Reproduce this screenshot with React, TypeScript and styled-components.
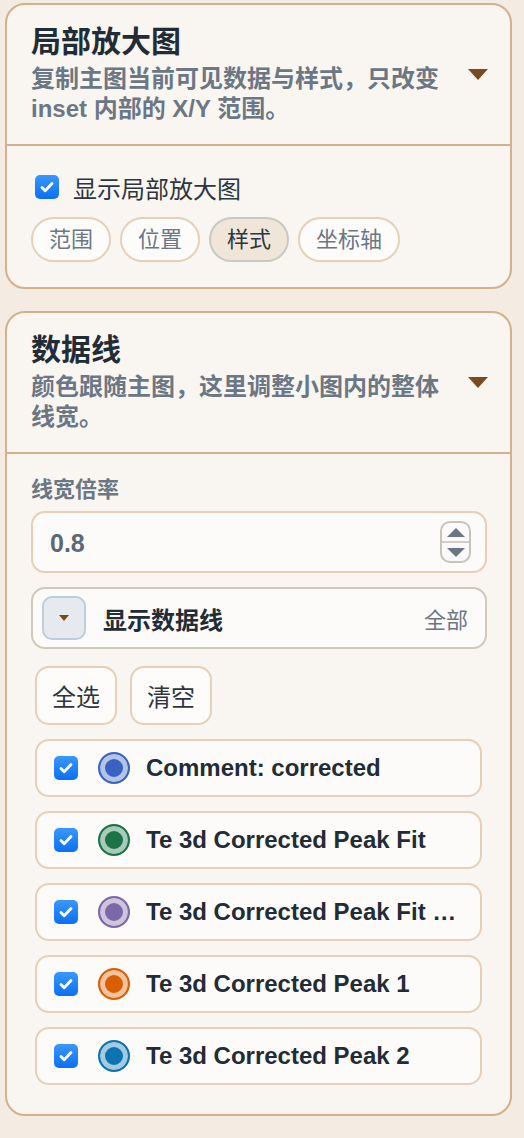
import React, { useState } from "react";
import styled, { createGlobalStyle } from "styled-components";

const FONT = `"Liberation Sans", "Noto Sans CJK SC", sans-serif`;

const GlobalStyle = createGlobalStyle`
    html, body {
        margin: 0;
        padding: 0;
        background: #f4ebe2;
        font-family: ${FONT};
    }
    * {
        box-sizing: border-box;
    }
`;

const Page = styled.div`
    width: 524px;
    padding: 3px 12px 0 5px;
    display: flex;
    flex-direction: column;
    gap: 22px;
`;

const Card = styled.section`
    background: #f9f5f0;
    border: 2px solid #d6af8b;
    border-radius: 20px;
    overflow: hidden;
`;

// next card, only its top edge is on screen
const CardStub = styled(Card)`
    height: 120px;
`;

const CardHeader = styled.div`
    display: flex;
    align-items: center;
    gap: 16px;
    padding: 19px 22px 20px 24px;
    border-bottom: 2px solid #d6af8b;
`;

const HeaderText = styled.div`
    flex: 1;
    min-width: 0;
`;

const Title = styled.div`
    font-size: 30px;
    line-height: 36px;
    font-weight: 700;
    color: #222c36;
    margin-bottom: 4px;
`;

const Subtitle = styled.div`
    font-size: 24px;
    line-height: 30px;
    font-weight: 600;
    color: #6b7785;
`;

const Caret = styled.span<{ $size?: number }>`
    width: 0;
    height: 0;
    flex: none;
    border-left: ${(p) => (p.$size ?? 20) / 2}px solid transparent;
    border-right: ${(p) => (p.$size ?? 20) / 2}px solid transparent;
    border-top: ${(p) => Math.round((p.$size ?? 20) * 0.55)}px solid #7a4a1e;
`;

const CardBody = styled.div<{ $pt: number; $pb: number }>`
    padding: ${(p) => p.$pt}px 23px ${(p) => p.$pb}px 24px;
    display: flex;
    flex-direction: column;
`;

const CheckRow = styled.label`
    display: flex;
    align-items: center;
    gap: 14px;
    height: 28px;
    padding-left: 4px;
    font-size: 24px;
    color: #2d3640;
`;

const CheckBox = styled.span`
    width: 24px;
    height: 24px;
    flex: none;
    border-radius: 5px;
    background: linear-gradient(#3a97ff, #0a70f2);
    display: flex;
    align-items: center;
    justify-content: center;
    svg {
        width: 16px;
        height: 16px;
    }
`;

const Pills = styled.div`
    display: flex;
    gap: 9px;
    margin-top: 16px;
`;

const Pill = styled.button<{ $active?: boolean }>`
    height: 45px;
    padding: 0 16px;
    border-radius: 999px;
    border: 2px solid ${(p) => (p.$active ? "#c9c9c3" : "#e6d0b8")};
    background: ${(p) => (p.$active ? "#efe5d9" : "#fefcfa")};
    color: ${(p) => (p.$active ? "#2d3640" : "#6b7785")};
    font-family: ${FONT};
    font-size: 22px;
    line-height: 40px;
`;

const FieldLabel = styled.div`
    font-size: 22px;
    line-height: 24px;
    font-weight: 600;
    color: #6b7785;
    margin-bottom: 9px;
`;

const NumberBox = styled.div`
    height: 62px;
    display: flex;
    align-items: center;
    padding: 0 14px 0 17px;
    background: #fdfbf9;
    border: 2px solid #e6cfb5;
    border-radius: 14px;
`;

const NumberValue = styled.div`
    flex: 1;
    font-size: 25px;
    font-weight: 700;
    color: #5d6875;
    padding-top: 3px;
`;

const Spinner = styled.div`
    width: 31px;
    height: 42px;
    border: 2px solid #c8c3b8;
    border-radius: 10px;
    display: flex;
    flex-direction: column;
    background: #fbfaf8;
    overflow: hidden;
`;

const SpinHalf = styled.div<{ $down?: boolean }>`
    flex: 1;
    display: flex;
    align-items: center;
    justify-content: center;
    border-top: ${(p) => (p.$down ? "2px solid #d2cdc3" : "none")};
    &::after {
        content: "";
        width: 0;
        height: 0;
        border-left: 9px solid transparent;
        border-right: 9px solid transparent;
        ${(p) => (p.$down ? "border-top: 9px solid #6b7785;" : "border-bottom: 9px solid #6b7785;")}
    }
`;

const Dropdown = styled.div`
    height: 62px;
    margin-top: 14px;
    display: flex;
    align-items: center;
    gap: 17px;
    padding: 0 17px 0 9px;
    background: #fdfbf9;
    border: 2px solid #d0c8bb;
    border-radius: 14px;
`;

const ToggleBox = styled.span`
    width: 44px;
    height: 44px;
    flex: none;
    display: flex;
    align-items: center;
    justify-content: center;
    background: #e6eaee;
    border: 2px solid #bccedb;
    border-radius: 10px;
`;

const DropLabel = styled.div`
    flex: 1;
    font-size: 24px;
    font-weight: 700;
    color: #222c36;
`;

const DropMeta = styled.div`
    font-size: 22px;
    color: #6b7785;
`;

const List = styled.div`
    display: flex;
    flex-direction: column;
    gap: 14px;
    padding: 0 5px 0 4px;
    margin-top: 17px;
`;

const ButtonRow = styled.div`
    display: flex;
    gap: 13px;
`;

const SmallButton = styled.button`
    height: 59px;
    padding: 0 15px;
    border: 2px solid #e6d0b8;
    border-radius: 14px;
    background: #fefcfa;
    font-family: ${FONT};
    font-size: 24px;
    color: #2d3640;
`;

const SeriesRow = styled.div`
    height: 58px;
    display: flex;
    align-items: center;
    padding: 0 20px 0 17px;
    background: #fdfbf9;
    border: 2px solid #e6d0b8;
    border-radius: 14px;
`;

const Swatch = styled.span<{ $color: string }>`
    width: 32px;
    height: 32px;
    flex: none;
    margin: 0 16px 0 20px;
    border-radius: 50%;
    background: ${(p) => p.$color};
    border: 2px solid ${(p) => p.$color};
    box-shadow: inset 0 0 0 5px rgba(255, 255, 255, 0.62);
`;

const SeriesName = styled.div`
    flex: 1;
    min-width: 0;
    font-size: 24px;
    font-weight: 700;
    color: #222c36;
    white-space: nowrap;
    overflow: hidden;
    text-overflow: ellipsis;
`;

const Check = () => (
    <CheckBox>
        <svg viewBox='0 0 16 16' fill='none'>
            <path d='M3 8.5l3.2 3.3L13 4.5' stroke='#fff' strokeWidth='2.8' strokeLinecap='round' strokeLinejoin='round' />
        </svg>
    </CheckBox>
);

const SERIES = [
    { name: "Comment: corrected", color: "#3a62c3" },
    { name: "Te 3d Corrected Peak Fit", color: "#1a7447" },
    { name: "Te 3d Corrected Peak Fit Background", color: "#7b68a6" },
    { name: "Te 3d Corrected Peak 1", color: "#d95f02" },
    { name: "Te 3d Corrected Peak 2", color: "#0b73b0" },
];

const TABS = ["范围", "位置", "样式", "坐标轴"];

const App: React.FC = () => {
    const [tab, setTab] = useState("样式");

    return (
        <>
            <GlobalStyle />
            <Page>
                <Card>
                    <CardHeader>
                        <HeaderText>
                            <Title>局部放大图</Title>
                            <Subtitle>复制主图当前可见数据与样式，只改变 inset 内部的 X/Y 范围。</Subtitle>
                        </HeaderText>
                        <Caret />
                    </CardHeader>
                    <CardBody $pt={27} $pb={25}>
                        <CheckRow>
                            <Check />
                            显示局部放大图
                        </CheckRow>
                        <Pills>
                            {TABS.map((t) => (
                                <Pill key={t} $active={t === tab} onClick={() => setTab(t)}>
                                    {t}
                                </Pill>
                            ))}
                        </Pills>
                    </CardBody>
                </Card>

                <Card>
                    <CardHeader>
                        <HeaderText>
                            <Title>数据线</Title>
                            <Subtitle>颜色跟随主图，这里调整小图内的整体线宽。</Subtitle>
                        </HeaderText>
                        <Caret />
                    </CardHeader>
                    <CardBody $pt={24} $pb={29}>
                        <FieldLabel>线宽倍率</FieldLabel>
                        <NumberBox>
                            <NumberValue>0.8</NumberValue>
                            <Spinner>
                                <SpinHalf />
                                <SpinHalf $down />
                            </Spinner>
                        </NumberBox>
                        <Dropdown>
                            <ToggleBox>
                                <Caret $size={11} />
                            </ToggleBox>
                            <DropLabel>显示数据线</DropLabel>
                            <DropMeta>全部</DropMeta>
                        </Dropdown>
                        <List>
                            <ButtonRow>
                                <SmallButton>全选</SmallButton>
                                <SmallButton>清空</SmallButton>
                            </ButtonRow>
                            {SERIES.map((s) => (
                                <SeriesRow key={s.name}>
                                    <Check />
                                    <Swatch $color={s.color} />
                                    <SeriesName>{s.name}</SeriesName>
                                </SeriesRow>
                            ))}
                        </List>
                    </CardBody>
                </Card>

                <CardStub />
            </Page>
        </>
    );
};

export default App;
